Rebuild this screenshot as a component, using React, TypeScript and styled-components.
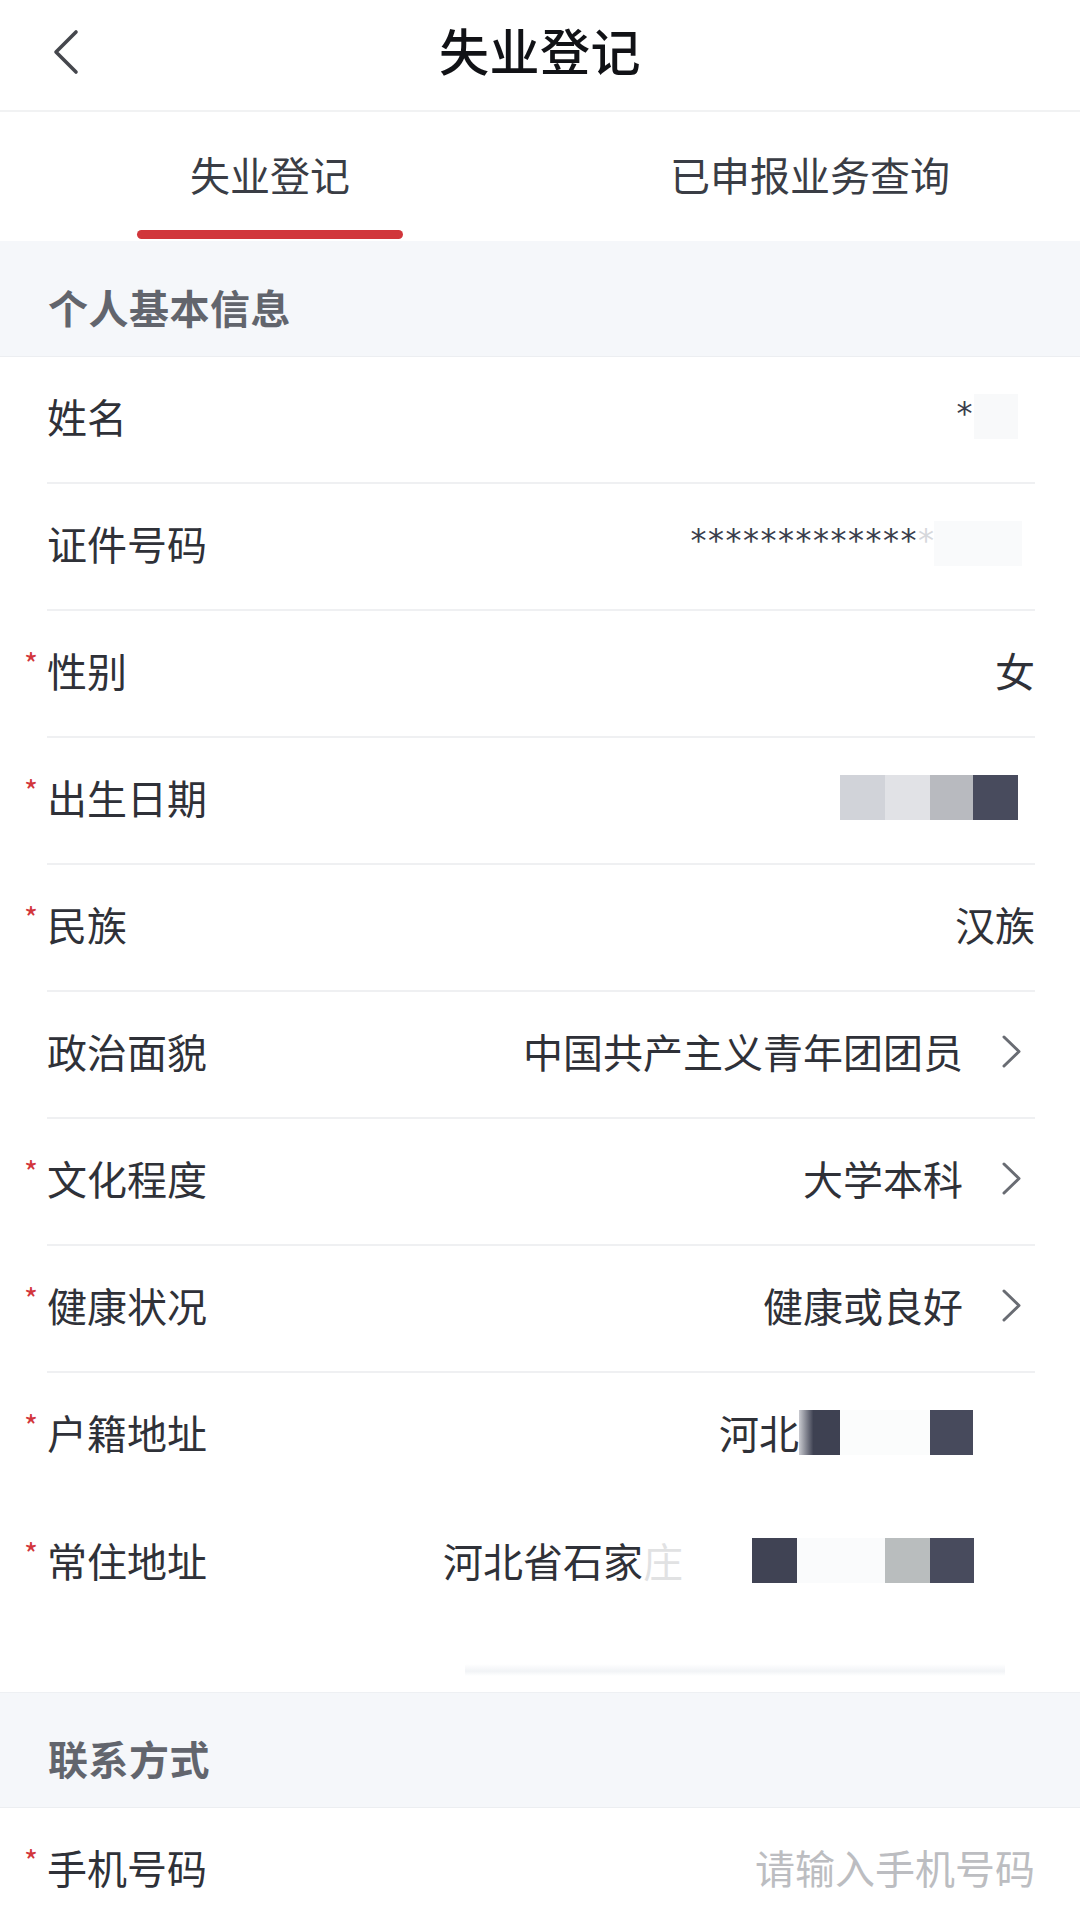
import React from "react";
import styled, { createGlobalStyle } from "styled-components";

const GlobalStyle = createGlobalStyle`
  html, body {
    margin: 0;
    padding: 0;
    background: #ffffff;
  }
  body {
    font-family: "Noto Sans CJK SC", "Noto Sans", sans-serif;
    color: #2f3138;
  }
  * { box-sizing: border-box; }
`;

const Page = styled.div`
  width: 1080px;
  background: #ffffff;
`;

const Header = styled.header`
  height: 112px;
  display: grid;
  grid-template-columns: 1fr auto 1fr;
  align-items: center;
  padding-bottom: 12px;
  border-bottom: 2px solid #f1f2f3;
`;

const BackButton = styled.div`
  padding-left: 52px;
  padding-top: 6px;
  display: flex;
  align-items: center;
`;

const Title = styled.h1`
  margin: 0;
  font-size: 50px;
  font-weight: 500;
  color: #111216;
  line-height: 1;
  letter-spacing: 0.5px;
`;

const Tabs = styled.nav`
  display: grid;
  grid-template-columns: 1fr 1fr;
  height: 129px;
`;

const Tab = styled.div`
  display: flex;
  flex-direction: column;
  align-items: center;
`;

const TabText = styled.span`
  margin-top: 34px;
  font-size: 40px;
  line-height: 56px;
  color: #3a3d45;
`;

const TabLine = styled.span<{ $active?: boolean }>`
  margin-top: 28px;
  width: 266px;
  height: 9px;
  border-radius: 5px;
  background: ${(p) => (p.$active ? "#d1363b" : "transparent")};
`;

const SectionHeader = styled.div`
  height: 116px;
  background: #f5f7fa;
  border-top: 1px solid #eef0f3;
  border-bottom: 1px solid #eceef1;
  display: flex;
  align-items: center;
  padding: 16px 0 0 48px;
  font-size: 40px;
  font-weight: 700;
  color: #62656d;
  letter-spacing: 0.5px;
`;

const FirstSectionHeader = styled(SectionHeader)`
  border-top: none;
`;

const Row = styled.div<{ $divider?: boolean; $tall?: boolean }>`
  margin: 0 45px 0 47px;
  height: ${(p) => (p.$tall ? "192px" : "127px")};
  display: flex;
  justify-content: space-between;
  align-items: ${(p) => (p.$tall ? "flex-start" : "center")};
  padding-top: ${(p) => (p.$tall ? "32px" : "0")};
  padding-bottom: ${(p) => (p.$tall ? "0" : "7px")};
  border-bottom: 2px solid ${(p) => (p.$divider ? "#eff0f2" : "transparent")};
`;

const Label = styled.span`
  position: relative;
  font-size: 40px;
  line-height: 56px;
  color: #2f3138;
  white-space: nowrap;
`;

const Star = styled.span`
  position: absolute;
  left: -23px;
  top: 1px;
  font-size: 30px;
  line-height: 40px;
  color: #d2363c;
`;

const Value = styled.div<{ $end?: number }>`
  display: flex;
  align-items: center;
  font-size: 40px;
  line-height: 56px;
  color: #2f3138;
  white-space: nowrap;
  margin-right: ${(p) => p.$end ?? 0}px;
`;

const Placeholder = styled(Value)`
  color: #bcbdc1;
`;

const Chevron = styled.svg`
  margin-left: 38px;
  margin-right: 13px;
  flex: none;
`;

const Mask = styled.span<{ $w: number; $c: string }>`
  display: inline-block;
  width: ${(p) => p.$w}px;
  height: 45px;
  background: ${(p) => p.$c};
  flex: none;
`;

const Stars = styled.span`
  font-family: "DejaVu Sans", sans-serif;
  font-size: 32px;
  letter-spacing: 1.5px;
  color: #3a3d4b;
  line-height: 56px;
  margin-top: -6px;
`;

const FadedStar = styled(Stars)`
  color: #d6d8dc;
  letter-spacing: 0;
`;

const Faded = styled.span`
  color: #9ea0a6;
  opacity: 0.3;
`;

const AddressColumn = styled.div`
  display: flex;
  flex-direction: column;
  align-items: flex-end;
`;

const Smudge = styled.span`
  margin-top: 76px;
  margin-right: 30px;
  width: 540px;
  height: 12px;
  background: linear-gradient(180deg, rgba(240, 242, 245, 0) 0%, #f1f3f6 60%, rgba(240, 242, 245, 0) 100%);
`;

const BackIcon = () => (
  <svg width="28" height="46" viewBox="0 0 28 46">
    <polyline
      points="24,3 4,23 24,43"
      fill="none"
      stroke="#45474d"
      strokeWidth="3.6"
      strokeLinecap="round"
      strokeLinejoin="round"
    />
  </svg>
);

const RightChevron = () => (
  <Chevron width="21" height="35" viewBox="0 0 21 35">
    <polyline
      points="3,3 18,17.5 3,32"
      fill="none"
      stroke="#696c73"
      strokeWidth="3"
      strokeLinecap="round"
      strokeLinejoin="round"
    />
  </Chevron>
);

type Field = {
  label: string;
  required?: boolean;
  divider?: boolean;
  content: React.ReactNode;
};

const fields: Field[] = [
  {
    label: "姓名",
    divider: true,
    content: (
      <Value $end={17}>
        <Stars>*</Stars>
        <Mask $w={44} $c="#f8f9fa" />
      </Value>
    ),
  },
  {
    label: "证件号码",
    divider: true,
    content: (
      <Value $end={13}>
        <Stars>*************</Stars>
        <FadedStar>*</FadedStar>
        <Mask $w={88} $c="#f9fafb" />
      </Value>
    ),
  },
  { label: "性别", required: true, divider: true, content: <Value>女</Value> },
  {
    label: "出生日期",
    required: true,
    divider: true,
    content: (
      <Value $end={17}>
        <Mask $w={45} $c="#d1d3d9" />
        <Mask $w={45} $c="#e1e2e6" />
        <Mask $w={43} $c="#b8babf" />
        <Mask $w={45} $c="#484b5d" />
      </Value>
    ),
  },
  { label: "民族", required: true, divider: true, content: <Value>汉族</Value> },
  {
    label: "政治面貌",
    divider: true,
    content: (
      <Value>
        中国共产主义青年团团员
        <RightChevron />
      </Value>
    ),
  },
  {
    label: "文化程度",
    required: true,
    divider: true,
    content: (
      <Value>
        大学本科
        <RightChevron />
      </Value>
    ),
  },
  {
    label: "健康状况",
    required: true,
    divider: true,
    content: (
      <Value>
        健康或良好
        <RightChevron />
      </Value>
    ),
  },
  {
    label: "户籍地址",
    required: true,
    content: (
      <Value $end={62}>
        河北
        <Mask $w={41} $c="linear-gradient(90deg, #c9cad0 0%, #3e4152 35%, #3e4152 100%)" />
        <Mask $w={90} $c="#fbfcfc" />
        <Mask $w={43} $c="#474a5c" />
      </Value>
    ),
  },
];

export default function App() {
  return (
    <Page>
      <GlobalStyle />
      <Header>
        <BackButton>
          <BackIcon />
        </BackButton>
        <Title>失业登记</Title>
        <div />
      </Header>

      <Tabs>
        <Tab>
          <TabText>失业登记</TabText>
          <TabLine $active />
        </Tab>
        <Tab>
          <TabText>已申报业务查询</TabText>
          <TabLine />
        </Tab>
      </Tabs>

      <FirstSectionHeader>个人基本信息</FirstSectionHeader>

      {fields.map((f) => (
        <Row key={f.label} $divider={f.divider}>
          <Label>
            {f.required && <Star>*</Star>}
            {f.label}
          </Label>
          {f.content}
        </Row>
      ))}

      <Row $tall>
        <Label>
          <Star>*</Star>
          常住地址
        </Label>
        <AddressColumn>
          <Value $end={61}>
            河北省石家<Faded>庄</Faded>
            <Mask $w={69} $c="#ffffff" />
            <Mask $w={45} $c="#404354" />
            <Mask $w={88} $c="#fafbfc" />
            <Mask $w={45} $c="#b9bdbe" />
            <Mask $w={44} $c="#484b5d" />
          </Value>
          <Smudge />
        </AddressColumn>
      </Row>

      <SectionHeader>联系方式</SectionHeader>

      <Row>
        <Label>
          <Star>*</Star>
          手机号码
        </Label>
        <Placeholder>请输入手机号码</Placeholder>
      </Row>
    </Page>
  );
}
